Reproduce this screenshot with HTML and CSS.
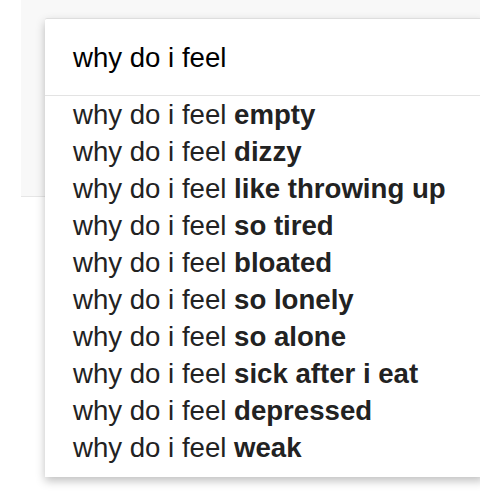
FILE: index.html
```html
<!DOCTYPE html>
<html>
<head>
<meta charset="utf-8">
<link rel="stylesheet" href="styles.css">
</head>
<body>
<div class="stage">
  <div class="backdrop"></div>
  <div class="suggest">
    <div class="query">why do i feel</div>
    <ul class="list">
      <li>why do i feel <b>empty</b></li>
      <li>why do i feel <b>dizzy</b></li>
      <li>why do i feel <b>like throwing up</b></li>
      <li>why do i feel <b>so tired</b></li>
      <li>why do i feel <b>bloated</b></li>
      <li>why do i feel <b>so lonely</b></li>
      <li>why do i feel <b>so alone</b></li>
      <li>why do i feel <b>sick after i eat</b></li>
      <li>why do i feel <b>depressed</b></li>
      <li>why do i feel <b>weak</b></li>
    </ul>
  </div>
</div>
</body>
</html>
```
FILE: styles.css
```css
html, body {
  margin: 0;
  padding: 0;
  background: #ffffff;
}
body {
  font-family: "Liberation Sans", Arial, Helvetica, sans-serif;
}
.stage {
  position: relative;
  margin-left: 21px;
  width: 459px;
  height: 500px;
  overflow: hidden;
}
.backdrop {
  height: 196px;
  background: #f8f8f8;
  border-bottom: 1px solid #e6e6e6;
}
.suggest {
  position: absolute;
  top: 18px;
  left: 24px;
  right: -4px;
  background: #fff;
  border-top: 1px solid #dedede;
  border-radius: 2px 2px 0 0;
  box-shadow: 0 4px 10px rgba(0, 0, 0, 0.25);
  font-size: 27.6px;
  line-height: 37px;
}
.query {
  padding: 20px 0 19px 28px;
  color: #000;
  border-bottom: 1px solid #e3e3e3;
}
.list {
  list-style: none;
  margin: 0;
  padding: 0 0 11px 28px;
  color: #222;
}
.list b {
  font-weight: bold;
}
```
